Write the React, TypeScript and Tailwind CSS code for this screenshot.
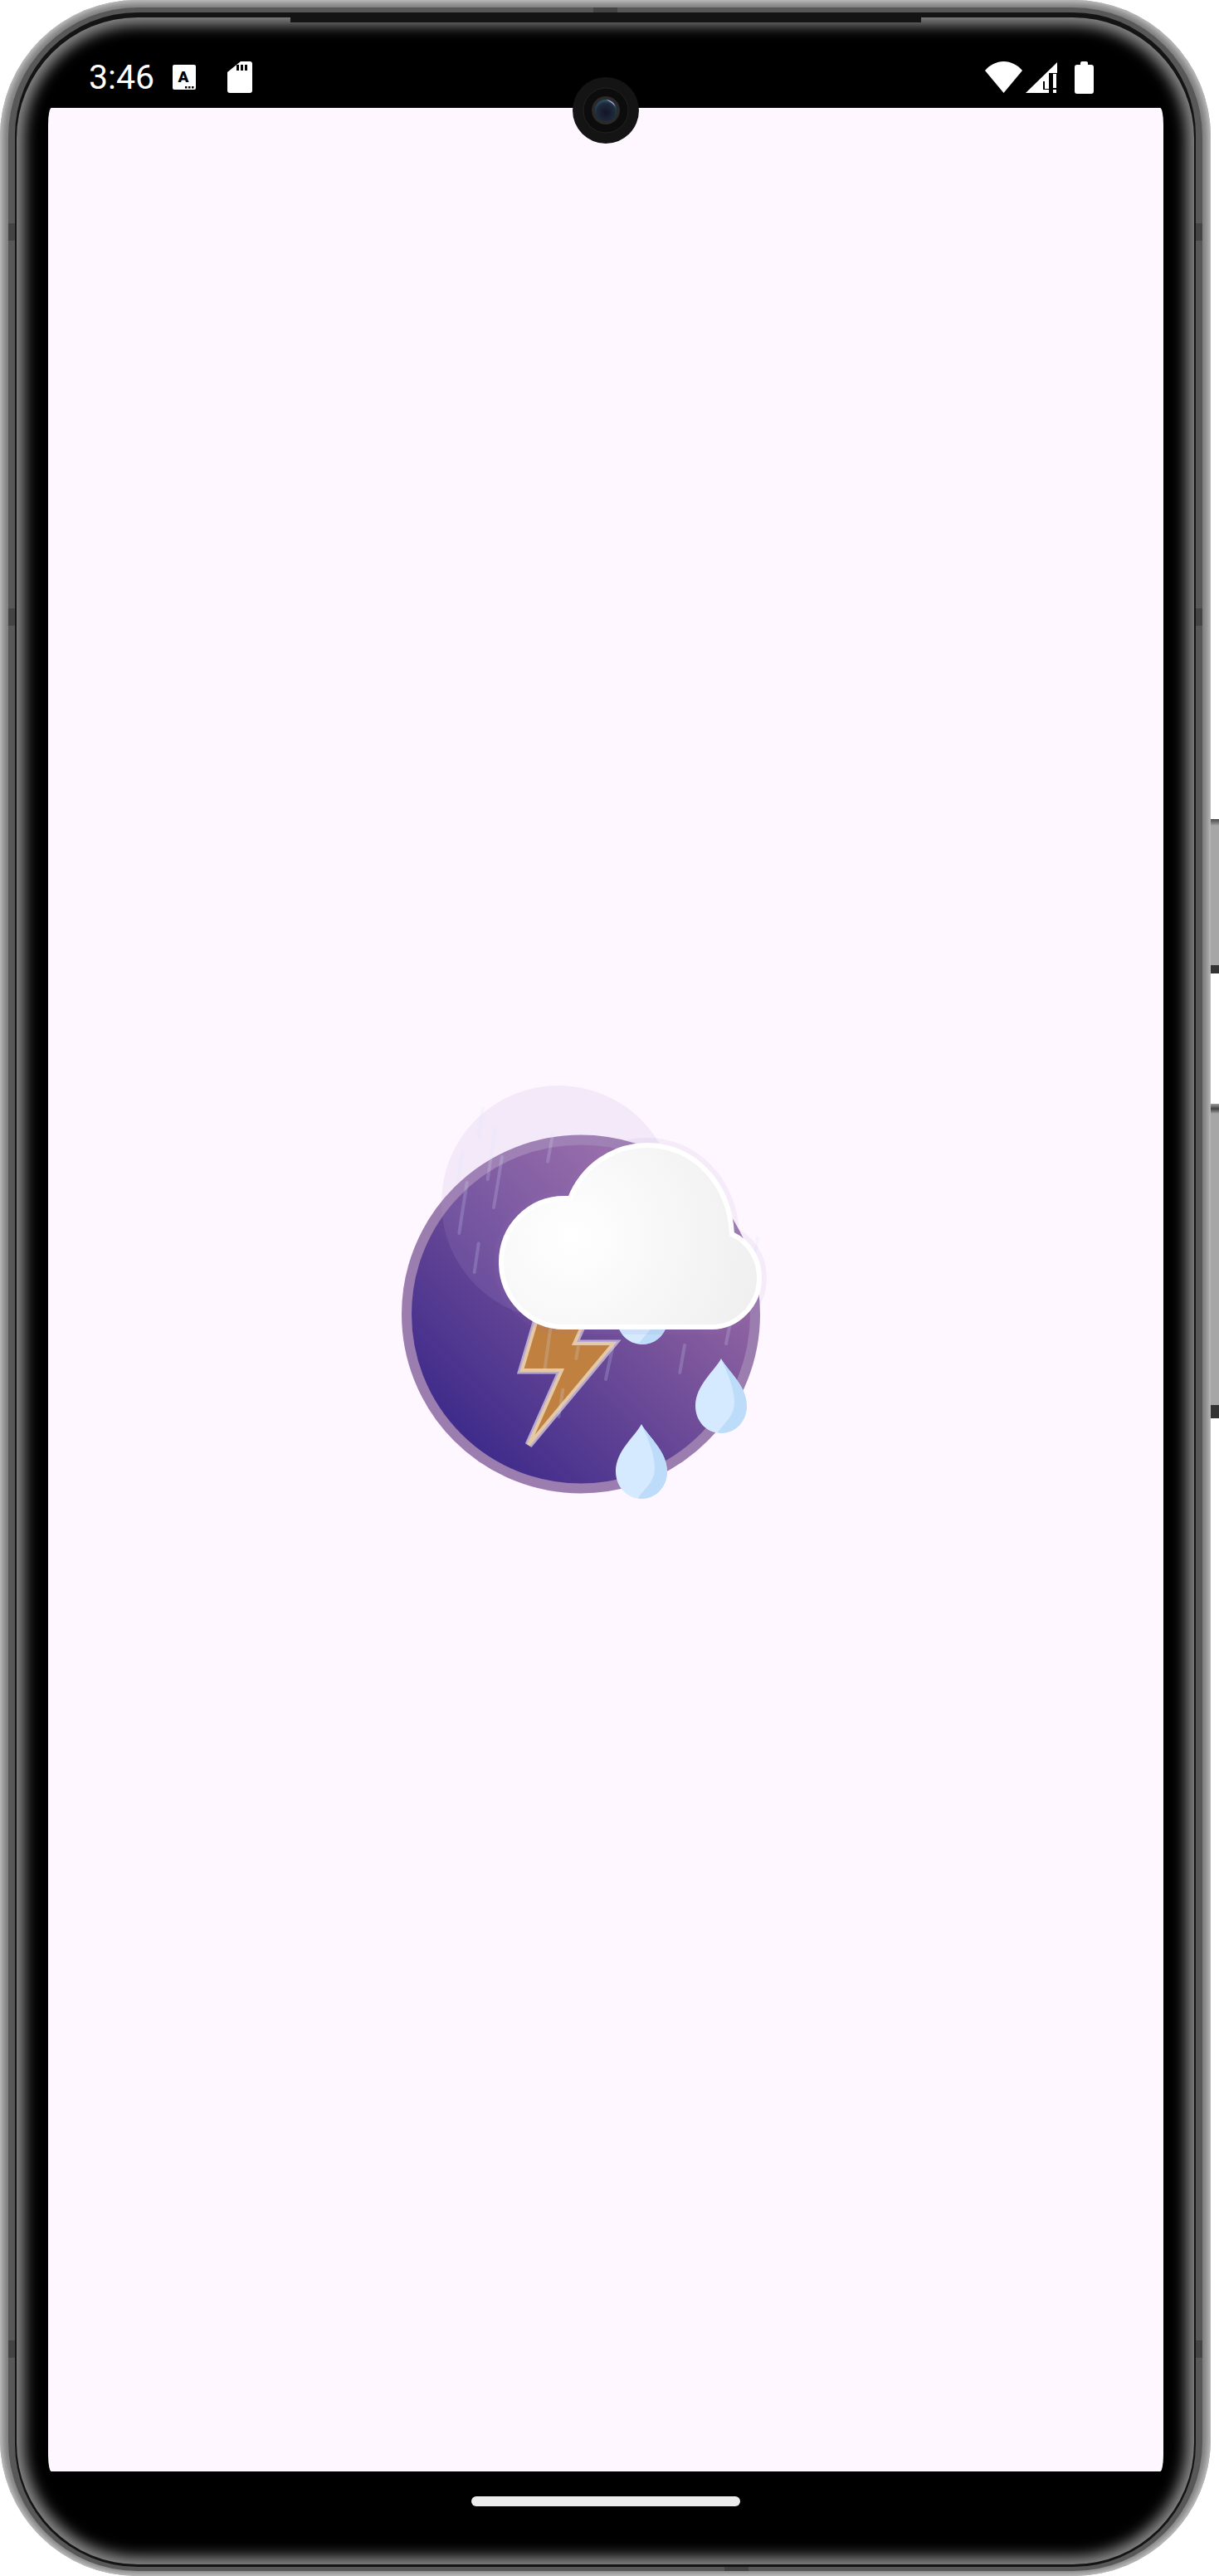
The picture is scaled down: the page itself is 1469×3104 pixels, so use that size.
import React from 'react';

const rain = [
  [581.7, 1335, 576.7, 1369],
  [596.7, 1360, 587.7, 1421],
  [557.3, 1387, 552.7, 1421],
  [605, 1394, 595, 1455],
  [562.7, 1425, 553.3, 1486],
  [576.7, 1498.6, 571.7, 1533],
  [666, 1367.5, 660, 1399.6],
  [825, 1621, 819.3, 1654],
  [738.3, 1623, 730, 1662],
  [879.3, 1598, 875, 1619],
  [913.3, 1491, 910, 1508.6],
  [678.3, 1674.6, 673.3, 1707],
  [663.3, 1601, 656.7, 1648],
  [696.7, 1623, 694.3, 1637],
];

const cloud =
  'M680 1599C638 1599 604 1564 604 1521C604 1478 638 1444 680 1444L687 1444C702 1406 738 1380 780 1380C834 1380 879 1424 882 1487C903 1497 915 1517 915 1540C915 1572 889 1599 858 1599Z';

const bolt = 'M647 1590L629 1651L677 1651L637 1741L739 1619L692 1619L705 1590Z';

const Drop = ({ x, y }: { x: number; y: number }) => (
  <g transform={`translate(${x} ${y})`}>
    <path d="M31 0C24 14 0 32 0 57C0 76 14 90 31 90C48 90 62 76 62 57C62 32 38 14 31 0Z" fill="#d6eaff" />
    <path d="M31 0C38 16 47 35 47 53C47 70 34 78 27 89C29 90 30 90 31 90C48 90 62 76 62 57C62 32 38 14 31 0Z" fill="#bcdcf9" />
  </g>
);

const StormIcon = () => (
  <svg viewBox="460 1284 540 540" className="w-[540px] h-[540px]">
    <defs>
      <linearGradient id="disc" gradientUnits="userSpaceOnUse" x1="540" y1="1760" x2="880" y2="1420">
        <stop offset="0.08" stopColor="#402c8b" />
        <stop offset="1" stopColor="#a673a8" />
      </linearGradient>
      <radialGradient id="puff" gradientUnits="userSpaceOnUse" cx="690" cy="1490" r="250">
        <stop offset="0" stopColor="#ffffff" />
        <stop offset="1" stopColor="#eeeeee" />
      </radialGradient>
    </defs>
    <circle cx="700" cy="1583.5" r="210" fill="url(#disc)" stroke="#9c7db0" strokeWidth="12" />
    <circle cx="673" cy="1449" r="141" fill="#b89ad8" opacity="0.15" />
    <path d={bolt} fill="none" stroke="#b8a9d0" strokeWidth="9" />
    <path d={bolt} fill="#c08040" stroke="#e5c8a6" strokeWidth="4" />
    <Drop x={743} y={1530} />
    <Drop x={838} y={1637} />
    <Drop x={742} y={1716} />
    {rain.map((r, i) => (
      <line key={i} x1={r[0]} y1={r[1]} x2={r[2]} y2={r[3]} stroke="#d8e6ff" strokeOpacity="0.2" strokeWidth="4" strokeLinecap="round" />
    ))}
    <path d={cloud} fill="none" stroke="#9a7cc0" strokeOpacity="0.09" strokeWidth="18" />
    <path d={cloud} fill="url(#puff)" stroke="#ffffff" strokeWidth="6" />
  </svg>
);

const Camera = () => (
  <svg viewBox="0 0 80 80" className="absolute left-[690px] top-[93px] w-[80px] h-[80px]">
    <defs>
      <radialGradient id="lens" cx="0.5" cy="0.6" r="0.6">
        <stop offset="0" stopColor="#141424" />
        <stop offset="0.7" stopColor="#1c2a3c" />
        <stop offset="1" stopColor="#2f5468" />
      </radialGradient>
    </defs>
    <circle cx="40" cy="40" r="40" fill="#141414" />
    <circle cx="40" cy="40" r="27" fill="#0c0c0c" stroke="#222222" strokeWidth="1" />
    <circle cx="40" cy="40" r="17" fill="#2a2a2a" />
    <circle cx="40" cy="40" r="13" fill="url(#lens)" />
    <path d="M40 27A13 13 0 0 1 52 36C49 32 45 29 40 27Z" fill="#b9a0d8" />
  </svg>
);

const StatusBar = () => (
  <div className="h-[109px] pt-[52px] pl-[87px] pr-[121px] flex justify-between items-start">
    <div className="flex items-center h-10">
      <span className="font-[Roboto,sans-serif] text-[41px] leading-none text-white">3:46</span>
      <svg viewBox="0 0 28 30" className="w-7 h-[30px] ml-[22px]">
        <rect width="28" height="30" rx="2" fill="#fff" />
        <text x="13" y="21" textAnchor="middle" fontFamily="Roboto, sans-serif" fontWeight="900" fontSize="19" fill="#000">A</text>
        <rect x="15" y="26" width="2.5" height="2.5" fill="#000" />
        <rect x="19" y="26" width="2.5" height="2.5" fill="#000" />
        <rect x="23" y="26" width="2.5" height="2.5" fill="#000" />
      </svg>
      <svg viewBox="0 0 30 38" className="w-[30px] h-[38px] ml-[38px]">
        <path d="M16 0H27Q30 0 30 3V35Q30 38 27 38H3Q0 38 0 35V13Z" fill="#fff" />
        <rect x="11" y="4" width="3" height="7" fill="#000" />
        <rect x="16" y="4" width="3" height="7" fill="#000" />
        <rect x="21" y="4" width="3" height="7" fill="#000" />
      </svg>
    </div>
    <div className="flex items-center h-10">
      <svg viewBox="0 0 45 38" className="w-[45px] h-[38px]">
        <path d="M22.5 38L0 11C6 4 14 0 22.5 0S39 4 45 11Z" fill="#fff" />
      </svg>
      <svg viewBox="0 0 38 37" className="w-[38px] h-[37px] ml-1">
        <path d="M0 37L38 0V37Z" fill="#fff" />
        <path d="M21 23V33H28V32H23V23Z" fill="#000" />
        <rect x="28" y="13" width="10" height="24" fill="#000" />
        <rect x="33" y="14" width="4" height="17" fill="#fff" />
        <rect x="33" y="33" width="4" height="4" fill="#fff" />
      </svg>
      <svg viewBox="0 0 23 39" className="w-[23px] h-[39px] ml-[21px]">
        <path d="M7 4V2Q7 0 9 0H14Q16 0 16 2V4H20Q23 4 23 7V36Q23 39 20 39H3Q0 39 0 36V7Q0 4 3 4Z" fill="#fff" />
      </svg>
    </div>
  </div>
);

// dark antenna breaks on the metal band
const bandMarks = [269, 733, 2820];

const App = () => {
  return (
    <div className="w-[1469px] h-[3104px] flex bg-white overflow-hidden">
      <div className="relative w-[1459px] h-full rounded-[165px] bg-[#7c7c7c] shadow-[inset_0_0_9px_3px_#cccccc] px-[10px] pt-[9px] pb-[6px]">
        <div className="h-full rounded-[156px] bg-[#585858] px-2 pt-[6px] pb-[5px]">
          <div className="h-full rounded-[148px] bg-[#141414] px-[2px] pt-[6px] pb-[3px]">
            <div className="relative h-full rounded-[146px] bg-black shadow-[inset_0_0_17px_9px_#8e8e8e] flex flex-col">
              <StatusBar />
              <div className="flex-1 ml-[38px] mr-[37px] bg-[#fef7ff] rounded-[4px/20px] flex items-center justify-center">
                <StormIcon />
              </div>
              <div className="h-[112px] pt-[30px] flex justify-center">
                <div className="w-[324px] h-3 rounded-md bg-[#ececec]" />
              </div>
            </div>
          </div>
        </div>
        {bandMarks.map((y) => (
          <React.Fragment key={y}>
            <div className="absolute left-[10px] w-2 h-[21px] bg-[#444444]" style={{ top: y }} />
            <div className="absolute right-[10px] w-2 h-[21px] bg-[#444444]" style={{ top: y }} />
          </React.Fragment>
        ))}
        <div className="absolute left-[715px] top-[9px] w-[29px] h-[6px] bg-[#444444]" />
        <div className="absolute left-[873px] bottom-[6px] w-[29px] h-[5px] bg-[#444444]" />
        <div className="absolute left-[350px] top-[21px] w-[760px] h-[6px] bg-[#141414]" />
        <Camera />
      </div>
      <div className="w-[10px] pt-[987px] flex flex-col">
        <div className="h-[186px] flex flex-col bg-[#a6a6a6]">
          <div className="h-[8px] bg-gradient-to-b from-[#4a4a4a] to-[#a6a6a6]" />
          <div className="flex-1" />
          <div className="h-[10px] bg-[#333333]" />
        </div>
        <div className="h-[379px] mt-[157px] flex flex-col bg-[#a6a6a6]">
          <div className="h-[12px] bg-gradient-to-b from-[#a0a0a0] via-[#444444] to-[#a6a6a6]" />
          <div className="flex-1" />
          <div className="h-[16px] bg-[#333333]" />
        </div>
      </div>
    </div>
  );
};

export default App;
